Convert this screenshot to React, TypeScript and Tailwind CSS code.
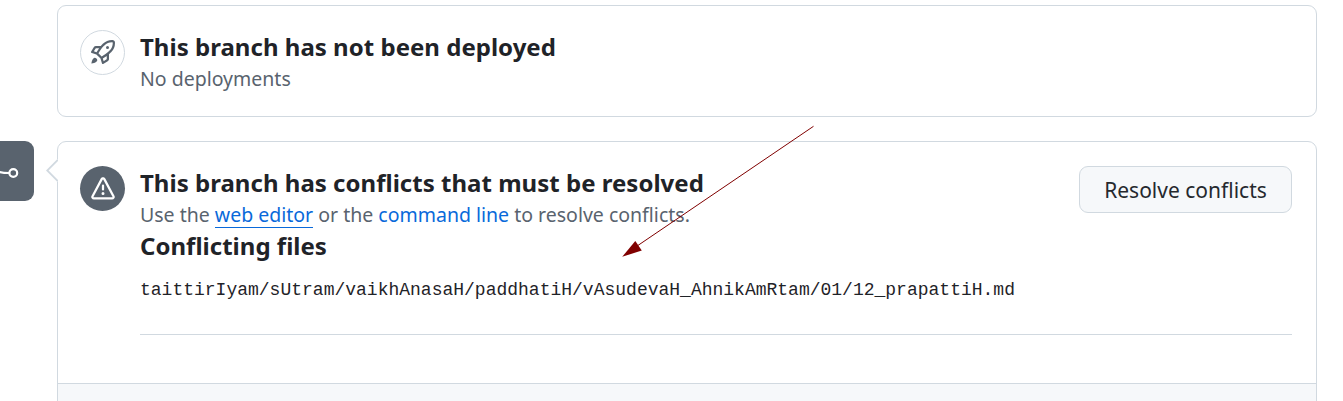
import React from "react";

const ROCKET =
  "M14.064 0h.186C15.216 0 16 .784 16 1.75v.186a8.752 8.752 0 0 1-2.564 6.186l-.458.459c-.314.314-.641.616-.979.904v3.207c0 .608-.315 1.172-.833 1.49l-2.774 1.707a.749.749 0 0 1-1.11-.418l-.954-3.102a1.214 1.214 0 0 1-.145-.125L3.754 9.816a1.218 1.218 0 0 1-.124-.145L.528 8.717a.749.749 0 0 1-.418-1.11l1.71-2.774A1.748 1.748 0 0 1 3.31 4h3.204c.288-.338.59-.665.904-.979l.459-.458A8.749 8.749 0 0 1 14.064 0ZM8.938 3.623h-.002l-.458.458c-.76.76-1.437 1.598-2.02 2.5l-1.5 2.317 2.143 2.143 2.317-1.5c.902-.583 1.74-1.26 2.499-2.02l.459-.458a7.25 7.25 0 0 0 2.123-5.127V1.75a.25.25 0 0 0-.25-.25h-.186a7.249 7.249 0 0 0-5.125 2.123ZM3.56 14.56c-.732.732-2.334 1.045-3.005 1.148a.234.234 0 0 1-.201-.064.234.234 0 0 1-.064-.201c.103-.671.416-2.273 1.15-3.003a1.502 1.502 0 1 1 2.12 2.12Zm6.94-3.935c-.088.06-.177.118-.266.175l-2.35 1.521.548 1.783 1.949-1.2a.25.25 0 0 0 .119-.213ZM3.678 8.116 5.2 5.766c.058-.09.117-.178.176-.266H3.309a.25.25 0 0 0-.213.119l-1.2 1.95ZM12 5a1 1 0 1 1-2 0 1 1 0 0 1 2 0Z";

const ALERT =
  "M6.457 1.047c.659-1.234 2.427-1.234 3.086 0l6.082 11.378A1.75 1.75 0 0 1 14.082 15H1.918a1.75 1.75 0 0 1-1.543-2.575Zm1.763.707a.25.25 0 0 0-.44 0L1.698 13.132a.25.25 0 0 0 .22.368h12.164a.25.25 0 0 0 .22-.368Zm.53 3.996v2.5a.75.75 0 0 1-1.5 0v-2.5a.75.75 0 0 1 1.5 0ZM9 11a1 1 0 1 1-2 0 1 1 0 0 1 2 0Z";

function Octicon({ d }: { d: string }) {
  return (
    <svg viewBox="0 0 16 16" className="size-6 fill-current" aria-hidden="true">
      <path d={d} />
    </svg>
  );
}

function Title({ children }: { children: React.ReactNode }) {
  return <h3 className="text-[24px] leading-9 font-bold tracking-[0.02px] text-[#1f2328]">{children}</h3>;
}

function MergeBadge() {
  return (
    <div className="h-[60px] w-[34px] shrink-0 overflow-hidden rounded-r-[9px] bg-[#59636e]">
      <svg viewBox="0 0 34 60" className="h-[60px] w-[34px]" fill="none" stroke="#fff" strokeWidth="2.2" aria-hidden="true">
        <path d="M-1 30.8C2 31.8 4 32 9 32" />
        <circle cx="13.3" cy="32" r="3.9" />
      </svg>
    </div>
  );
}

function Arrow() {
  return (
    <svg viewBox="0 0 200 140" className="pointer-events-none absolute top-[120px] left-[618px] h-[140px] w-[200px]" aria-hidden="true">
      <path d="M195.5 6.3 20 125.4" stroke="#800000" strokeWidth="1" />
      <path d="M4.2 136.8 17.3 121l6.5 9.4Z" fill="#800000" />
    </svg>
  );
}

export default function App() {
  return (
    <main className="relative h-[401px] w-[1343px] overflow-hidden bg-white pt-[5px] font-['Noto_Sans',sans-serif]">
      <section className="ml-[57px] flex h-[112px] w-[1260px] gap-[15px] rounded-[9px] border border-[#d1d9e0] px-[22px] pt-6">
        <div className="flex size-[45px] shrink-0 items-center justify-center rounded-full border border-[#d1d9e0] pb-px pl-px text-[#59636e]">
          <Octicon d={ROCKET} />
        </div>
        <div className="-mt-px">
          <Title>This branch has not been deployed</Title>
          <p className="text-[19.5px] leading-[27px] text-[#59636e]">No deployments</p>
        </div>
      </section>

      <div className="mt-6 flex">
        <MergeBadge />
        <section className="relative ml-[23px] h-[320px] w-[1260px] shrink-0 rounded-t-[9px] border border-[#d1d9e0]">
          <svg viewBox="0 0 12 24" className="absolute top-[17px] -left-[12px] h-6 w-3" aria-hidden="true">
            <path d="M12 0 1 11.5 12 23Z" fill="#fff" />
            <path d="M11.8 .8 1.2 11.5 11.8 22.2" fill="none" stroke="#d1d9e0" strokeWidth="1.8" />
          </svg>
          <div className="flex h-[241px] gap-[15px] px-6 pt-6 pl-[22px]">
            <div className="flex size-[45px] shrink-0 items-center justify-center rounded-full bg-[#59636e] text-white">
              <Octicon d={ALERT} />
            </div>
            <div className="flex-1">
              <div className="flex h-[62px] items-start justify-between">
                <div className="-mt-px">
                  <Title>This branch has conflicts that must be resolved</Title>
                  <p className="text-[19.5px] leading-[27px] text-[#59636e]">
                    Use the{" "}
                    <a href="#editor" className="text-[#0969da] shadow-[inset_0_-1px_0_#0969da]">
                      web editor
                    </a>{" "}
                    or the <a href="#cli" className="text-[#0969da]">command line</a> to resolve conflicts.
                  </p>
                </div>
                <button className="h-[47px] w-[213px] rounded-[9px] border border-[#d1d9e0] bg-[#f6f8fa] text-[21px] leading-[30px] text-[#25292e]">
                  Resolve conflicts
                </button>
              </div>
              <Title>Conflicting files</Title>
              <div className="h-[71px] border-b border-[#d1d9e0] pt-[13px] font-['Liberation_Mono',monospace] text-[18px] leading-[27px] text-[#1f2328]">
                taittirIyam/sUtram/vaikhAnasaH/paddhatiH/vAsudevaH_AhnikAmRtam/01/12_prapattiH.md
              </div>
            </div>
          </div>
          <div className="h-[77px] border-t border-[#d1d9e0] bg-[#f6f8fa]" />
        </section>
      </div>
      <Arrow />
    </main>
  );
}
